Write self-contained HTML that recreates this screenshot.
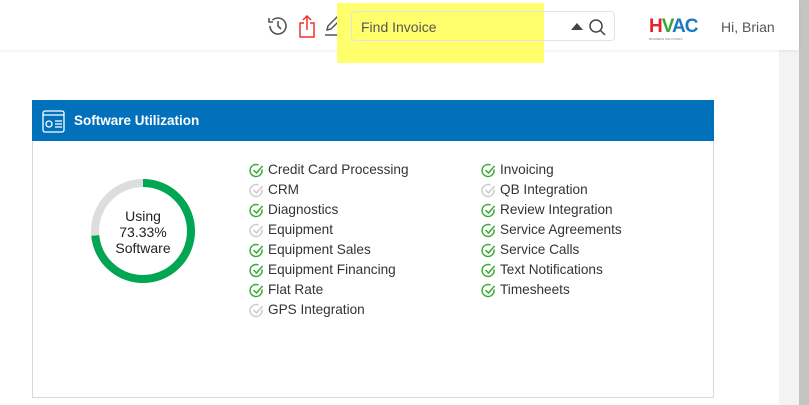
<!DOCTYPE html>
<html><head><style>
body{margin:0;width:809px;height:405px;overflow:hidden;background:#fff;font-family:"Liberation Sans",sans-serif;position:relative}
.hdr{position:absolute;left:0;top:0;width:799px;height:50px;background:#fff;box-shadow:0 1px 3px rgba(0,0,0,.08);z-index:2}
.sb1{position:absolute;left:779px;top:50px;width:20px;height:355px;background:#f3f3f3}
.sb2{position:absolute;left:799px;top:0;width:10px;height:405px;background:#c4c4c4}
.hl{position:absolute;left:337px;top:3px;width:207px;height:60px;background:#ffff66;z-index:3;opacity:.95}
.search{position:absolute;left:351px;top:11px;width:264px;height:30px;border:1px solid #e3e3e3;border-radius:4px;z-index:4;box-sizing:border-box}
.search span{position:absolute;left:9px;top:7px;font-size:14px;color:#555}
.panel{position:absolute;left:32px;top:100px;width:682px;height:298px;border:1px solid #d8d8d8;box-sizing:border-box}
.ph{height:41px;background:#0271bb;color:#fff;font-weight:bold;font-size:13.5px;line-height:41px;padding-left:42px;margin:-1px -1px 0 -1px}
.it{position:absolute;font-size:13.6px;color:#333;height:20px;line-height:20px}
.it svg{position:absolute;left:-19px;top:3px}
</style></head><body>
<div class="hdr">
<svg style="position:absolute;left:266px;top:14px" width="24" height="24" viewBox="0 0 24 24" fill="none" stroke="#555" stroke-width="1.6"><path d="M4 12a8 8 0 1 0 2.5-5.8"/><path d="M3 4v4h4"/><path d="M12 7v5l3 3"/></svg>
<svg style="position:absolute;left:297px;top:13px" width="20" height="26" viewBox="0 0 20 26" fill="none" stroke="#f0302b" stroke-width="1.5"><path d="M7 10H3v14h14V10h-4"/><path d="M10 3v14M6 7l4-4 4 4"/></svg>
<svg style="position:absolute;left:323px;top:13px" width="22" height="24" viewBox="0 0 22 24" fill="none" stroke="#555" stroke-width="1.5"><path d="M4 17l1-4 9-9 3 3-9 9z"/><path d="M2 22h18"/></svg>
<div style="position:absolute;left:649px;top:16px;font-weight:bold;font-size:19px;letter-spacing:-1px"><span style="color:#e8202a">H</span><span style="color:#3aa63a">V</span><span style="color:#1a7ac0">AC</span></div>
<div style="position:absolute;left:649px;top:37px;font-size:3px;color:#777">BUSINESS SOLUTIONS</div>
<div style="position:absolute;left:721px;top:19px;font-size:14px;color:#555">Hi, Brian</div>
</div>
<div class="hl"></div>
<div class="search"><span>Find Invoice</span>
<svg style="position:absolute;left:217px;top:6px" width="40" height="18" viewBox="0 0 40 18"><path d="M2 12l6-7 6 7z" fill="#444"/><circle cx="27" cy="8" r="6" fill="none" stroke="#444" stroke-width="1.5"/><path d="M31 12l5 5" stroke="#444" stroke-width="1.5"/></svg></div>
<div class="sb1"></div><div class="sb2"></div>
<div class="panel"><div class="ph">Software Utilization</div>
<svg style="position:absolute;left:9px;top:9px" width="23" height="23" viewBox="0 0 23 23" fill="none" stroke="#fff" stroke-width="1.3"><rect x="1" y="1" width="21" height="21" rx="2"/><path d="M1 5h21"/><circle cx="7" cy="14" r="3"/><path d="M13 11h7M13 14h7M13 17h7"/></svg>
<svg style="position:absolute;left:56px;top:76px" width="108" height="108" viewBox="0 0 108 108"><circle cx="54" cy="54" r="48" fill="none" stroke="#ddd" stroke-width="8"/><circle cx="54" cy="54" r="48" fill="none" stroke="#00a651" stroke-width="8" stroke-dasharray="221.2 400" transform="rotate(-90 54 54)"/></svg>
<div style="position:absolute;left:60px;top:107px;width:100px;text-align:center;font-size:14px;line-height:16px;color:#222">Using<br>73.33%<br>Software</div>
</div>
<div id="l"></div>
<script>
var a=[["Credit Card Processing",1],["CRM",0],["Diagnostics",1],["Equipment",0],["Equipment Sales",1],["Equipment Financing",1],["Flat Rate",1],["GPS Integration",0]],
b=[["Invoicing",1],["QB Integration",0],["Review Integration",1],["Service Agreements",1],["Service Calls",1],["Text Notifications",1],["Timesheets",1]],h="";
function f(arr,x){arr.forEach(function(e,i){var c=e[1]?"#3aaa35":"#ccc";h+='<div class="it" style="left:'+x+'px;top:'+(160+i*20)+'px"><svg width="15" height="15" viewBox="0 0 15 15" fill="none" stroke="'+c+'" stroke-width="1.5"><path d="M13 6.5A6 6 0 1 1 9.5 2"/><path d="M4.5 7l3 3 6-7"/></svg>'+e[0]+'</div>'})}
f(a,268);f(b,500);document.getElementById("l").innerHTML=h;
</script>
</body></html>
